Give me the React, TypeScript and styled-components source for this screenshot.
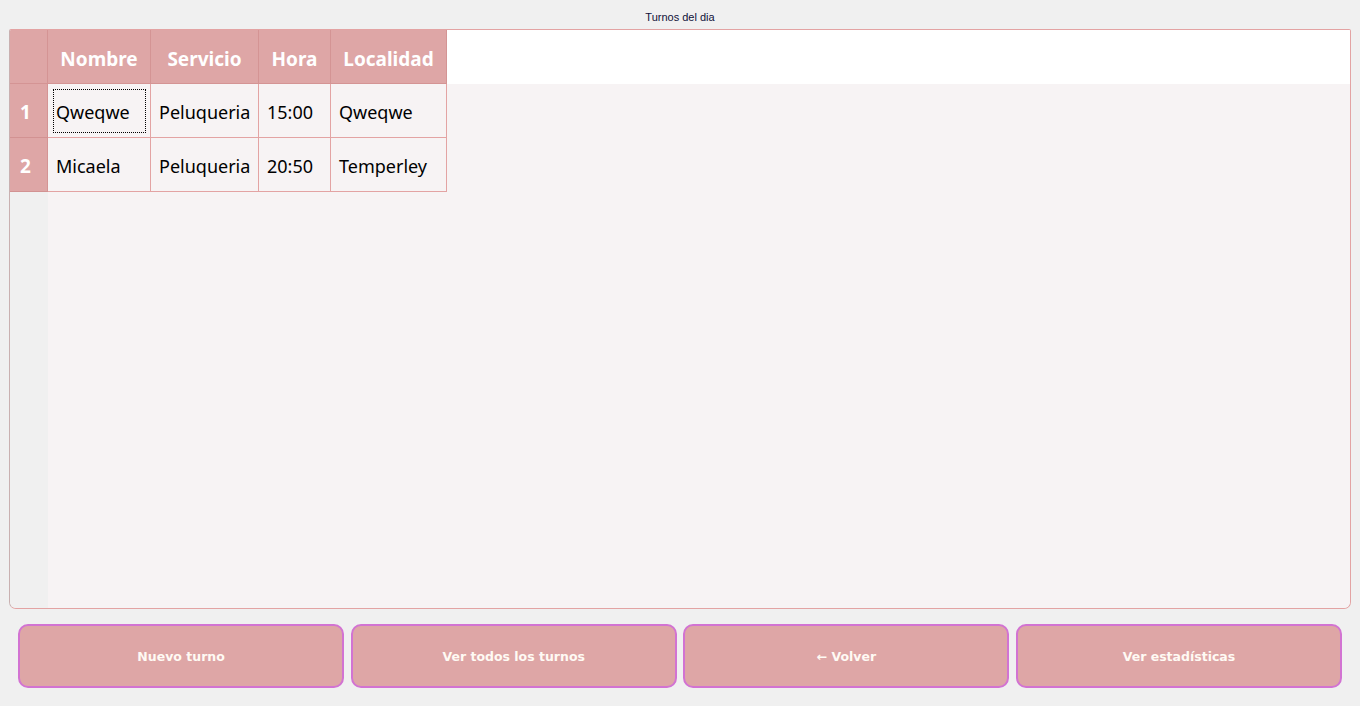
import React from 'react';
import styled, { createGlobalStyle } from 'styled-components';

const GlobalStyle = createGlobalStyle`
  html, body {
    margin: 0;
    padding: 0;
    background: #f0f0f0;
  }
  #root {
    height: 100vh;
  }
`;

const Page = styled.div`
  height: 100%;
  display: flex;
  flex-direction: column;
  box-sizing: border-box;
  padding-bottom: 18px;
`;

const Title = styled.div`
  height: 29px;
  box-sizing: border-box;
  padding-top: 10px;
  text-align: center;
  font-family: 'Liberation Sans', Arial, sans-serif;
  font-size: 11px;
  line-height: 14px;
  color: #10103a;
`;

const Frame = styled.div`
  flex: 1;
  min-height: 0;
  margin: 0 9px;
  border: 1px solid #e3a3a3;
  border-left-color: #c9b0b0;
  border-radius: 2px 2px 7px 7px;
  overflow: hidden;
  display: grid;
  grid-template-columns: 38px 103px 108px 72px 116px 1fr;
  grid-template-rows: 54px 54px 54px 1fr;
  background: #f7f3f4;
  font-family: 'Noto Sans', 'Open Sans', sans-serif;
`;

const HeadCell = styled.div`
  box-sizing: border-box;
  background: #dea6a6;
  border-right: 1px solid #d49494;
  border-bottom: 1px solid #d49494;
  color: #ffffff;
  font-weight: 700;
  font-size: 19px;
  padding-top: 4px;
  display: flex;
  align-items: center;
  justify-content: center;
`;

const RowHead = styled(HeadCell)`
  justify-content: flex-start;
  padding: 3px 0 0 10px;
  border-bottom-color: #d29292;
`;

const Cell = styled.div<{ $focused?: boolean }>`
  box-sizing: border-box;
  background: #f7f3f4;
  border-right: 1px solid #e3a3a3;
  border-bottom: 1px solid #e3a3a3;
  color: #000000;
  font-size: 18px;
  padding: 2px 0 0 8px;
  display: flex;
  align-items: center;
  outline: ${p => (p.$focused ? '1px dotted #000' : 'none')};
  outline-offset: -6px;
`;

const Filler = styled.div<{ $tone: 'white' | 'body' | 'gutter' }>`
  background: ${p =>
    p.$tone === 'white' ? '#ffffff' : p.$tone === 'gutter' ? '#f0f0f0' : '#f7f3f4'};
`;

const Buttons = styled.div`
  display: flex;
  gap: 6.5px;
  margin: 15px 18px 0;
  height: 64px;
`;

const Button = styled.button`
  flex: 1;
  box-sizing: border-box;
  background: #dea6a6;
  border: 2px solid #d273d2;
  border-radius: 10px;
  color: #fffaf4;
  font-family: 'DejaVu Sans', Tahoma, sans-serif;
  font-weight: 700;
  font-size: 12.5px;
  cursor: pointer;
`;

const columns = ['Nombre', 'Servicio', 'Hora', 'Localidad'];

const turnos = [
  ['Qweqwe', 'Peluqueria', '15:00', 'Qweqwe'],
  ['Micaela', 'Peluqueria', '20:50', 'Temperley'],
];

const actions = ['Nuevo turno', 'Ver todos los turnos', '\u2190 Volver', 'Ver estadísticas'];

export default function App() {
  return (
    <Page>
      <GlobalStyle />
      <Title>Turnos del dia</Title>
      <Frame>
        <HeadCell />
        {columns.map(c => (
          <HeadCell key={c}>{c}</HeadCell>
        ))}
        <Filler $tone="white" />
        {turnos.map((row, i) => (
          <React.Fragment key={i}>
            <RowHead>{i + 1}</RowHead>
            {row.map((value, j) => (
              <Cell key={j} $focused={i === 0 && j === 0}>
                {value}
              </Cell>
            ))}
            <Filler $tone="body" />
          </React.Fragment>
        ))}
        <Filler $tone="gutter" />
        <Filler $tone="body" style={{ gridColumn: '2 / -1' }} />
      </Frame>
      <Buttons>
        {actions.map(a => (
          <Button key={a}>{a}</Button>
        ))}
      </Buttons>
    </Page>
  );
}
